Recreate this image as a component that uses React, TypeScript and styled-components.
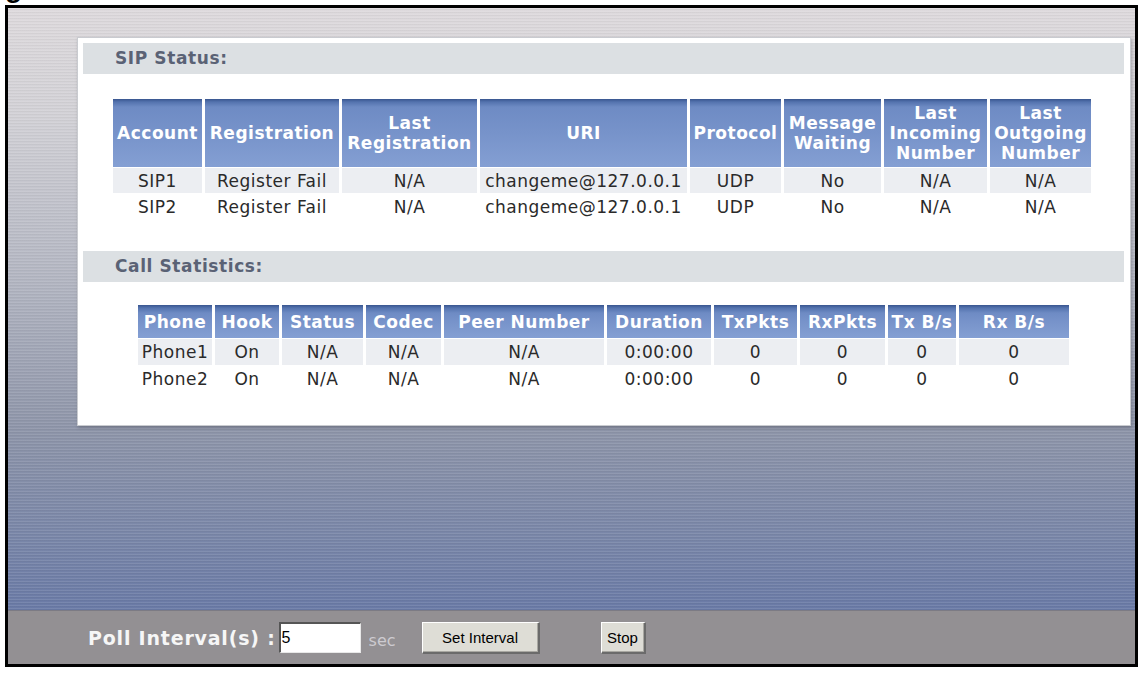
import React from 'react'
import styled, { createGlobalStyle } from 'styled-components'

const GlobalStyle = createGlobalStyle`
  html, body {
    margin: 0;
    padding: 0;
    background: #ffffff;
  }
  body {
    width: 1140px;
    height: 673px;
    overflow: hidden;
    font-family: "DejaVu Sans", Verdana, sans-serif;
  }
`

const Page = styled.div`
  width: 1140px;
  height: 673px;
  overflow: hidden;
`

// only the descender of the figure caption pokes out above the frame
const Caption = styled.div`
  height: 5px;
  overflow: hidden;
  span {
    display: block;
    margin: -26px 0 0 -20px;
    font: bold 28px/28px "Liberation Sans", Arial, sans-serif;
    color: #000;
  }
`

const Frame = styled.div`
  margin-left: 5px;
  width: 1133px;
  height: 662px;
  box-sizing: border-box;
  border: 3px solid #000;
  display: flex;
  flex-direction: column;
`

const Stage = styled.div`
  flex: 1;
  padding: 29px 4px 0 69px;
  background:
    repeating-linear-gradient(to bottom, rgba(255, 255, 255, 0.09) 0 1px, rgba(0, 0, 0, 0.035) 1px 2px, transparent 2px 3px),
    linear-gradient(to bottom, #dedadd 0%, #d2d1d6 18%, #b3b6c2 45%, #8e95a9 70%, #7986a8 88%, #6a7aa6 100%);
`

const Panel = styled.div`
  background: #ffffff;
  border: 1px solid #c9cbd0;
  box-shadow: 1px 2px 3px rgba(70, 72, 84, 0.35);
  padding: 5px 6px 32px 5px;
`

const SectionBar = styled.div<{ $top?: number }>`
  margin-top: ${({ $top }) => $top || 0}px;
  height: 31px;
  line-height: 31px;
  padding-left: 32px;
  background: #dce0e3;
  color: #5a6275;
  font-size: 17px;
  font-weight: bold;
  letter-spacing: 0.6px;
`

const DataTable = styled.table<{ $top: number; $left: number }>`
  margin: ${({ $top }) => $top}px 0 0 ${({ $left }) => $left}px;
  border-collapse: separate;
  border-spacing: 3px 1px;
  table-layout: fixed;
`

const HeadCell = styled.th<{ $w: number; $h: number }>`
  width: ${({ $w }) => $w}px;
  height: ${({ $h }) => $h}px;
  padding: 0;
  background: linear-gradient(to bottom, #38558f 0px, #5473ae 3px, #6e8bc4 8px, #7793ca 50%, #849fd3 100%);
  color: #ffffff;
  font-size: 17px;
  line-height: 20px;
  font-weight: bold;
  letter-spacing: 0.5px;
  text-align: center;
  vertical-align: middle;
`

const Cell = styled.td<{ $shade: boolean; $h: number }>`
  height: ${({ $h }) => $h}px;
  padding: 0;
  background: ${({ $shade }) => ($shade ? '#eceef2' : '#ffffff')};
  color: #2a2a2a;
  font-size: 17px;
  line-height: 20px;
  letter-spacing: 0.5px;
  text-align: center;
  white-space: nowrap;
`

const PollBar = styled.div`
  height: 54px;
  flex-shrink: 0;
  box-sizing: border-box;
  border-top: 1px solid #7c7b84;
  background: #939093;
  display: flex;
  align-items: center;
  padding-left: 80px;
`

const PollLabel = styled.span`
  color: #f6f6f6;
  font-size: 19px;
  font-weight: bold;
  letter-spacing: 0.8px;
`

const IntervalInput = styled.input`
  margin-left: 3px;
  width: 82px;
  height: 31px;
  box-sizing: border-box;
  border-style: solid;
  border-width: 2px 1px 1px 2px;
  border-color: #555555 #e8e8e8 #e8e8e8 #555555;
  padding: 0 1px;
  background: #ffffff;
  color: #000;
  font: 16px "Liberation Sans", Arial, sans-serif;
  outline: none;
`

const Unit = styled.span`
  margin-left: 8px;
  margin-top: 6px;
  color: #cdcbd0;
  font-size: 16px;
`

const Button = styled.button<{ $w: number; $gap: number }>`
  margin-left: ${({ $gap }) => $gap}px;
  width: ${({ $w }) => $w}px;
  height: 32px;
  padding: 0;
  background: #deddd6;
  border-style: solid;
  border-width: 1px 2px 2px 1px;
  border-color: #ffffff #6b6b6b #6b6b6b #ffffff;
  box-shadow: inset -1px -1px 0 #a9a8a2;
  color: #000;
  font: 15px "Liberation Sans", Arial, sans-serif;
`

const sipCols = [
  { label: 'Account', w: 89 },
  { label: 'Registration', w: 134 },
  { label: 'Last Registration', w: 135 },
  { label: 'URI', w: 207 },
  { label: 'Protocol', w: 91 },
  { label: 'Message Waiting', w: 97 },
  { label: 'Last Incoming Number', w: 103 },
  { label: 'Last Outgoing Number', w: 101 },
]

const sipRows = [
  ['SIP1', 'Register Fail', 'N/A', 'changeme@127.0.0.1', 'UDP', 'No', 'N/A', 'N/A'],
  ['SIP2', 'Register Fail', 'N/A', 'changeme@127.0.0.1', 'UDP', 'No', 'N/A', 'N/A'],
]

const callCols = [
  { label: 'Phone', w: 74 },
  { label: 'Hook', w: 64 },
  { label: 'Status', w: 81 },
  { label: 'Codec', w: 75 },
  { label: 'Peer Number', w: 160 },
  { label: 'Duration', w: 104 },
  { label: 'TxPkts', w: 83 },
  { label: 'RxPkts', w: 85 },
  { label: 'Tx B/s', w: 68 },
  { label: 'Rx B/s', w: 110 },
]

const callRows = [
  ['Phone1', 'On', 'N/A', 'N/A', 'N/A', '0:00:00', '0', '0', '0', '0'],
  ['Phone2', 'On', 'N/A', 'N/A', 'N/A', '0:00:00', '0', '0', '0', '0'],
]

interface StatusTableProps {
  cols: { label: string; w: number }[]
  rows: string[][]
  headHeight: number
  rowHeight: number
  top: number
  left: number
}

const StatusTable: React.FC<StatusTableProps> = ({ cols, rows, headHeight, rowHeight, top, left }) => (
  <DataTable $top={top} $left={left}>
    <thead>
      <tr>
        {cols.map((c) => (
          <HeadCell key={c.label} $w={c.w} $h={headHeight}>
            {c.label}
          </HeadCell>
        ))}
      </tr>
    </thead>
    <tbody>
      {rows.map((row, i) => (
        <tr key={i}>
          {row.map((v, j) => (
            <Cell key={j} $shade={i % 2 === 0} $h={rowHeight}>
              {v}
            </Cell>
          ))}
        </tr>
      ))}
    </tbody>
  </DataTable>
)

const App: React.FC = () => {
  return (
    <Page>
      <GlobalStyle />
      <Caption>
        <span>Figure</span>
      </Caption>
      <Frame>
        <Stage>
          <Panel>
            <SectionBar>SIP Status:</SectionBar>
            <StatusTable cols={sipCols} rows={sipRows} headHeight={68} rowHeight={25} top={24} left={27} />
            <SectionBar $top={31}>Call Statistics:</SectionBar>
            <StatusTable cols={callCols} rows={callRows} headHeight={33} rowHeight={26} top={22} left={52} />
          </Panel>
        </Stage>
        <PollBar>
          <PollLabel>Poll Interval(s) :</PollLabel>
          <IntervalInput defaultValue="5" />
          <Unit>sec</Unit>
          <Button $w={118} $gap={26}>Set Interval</Button>
          <Button $w={45} $gap={61}>Stop</Button>
        </PollBar>
      </Frame>
    </Page>
  )
}

export default App
